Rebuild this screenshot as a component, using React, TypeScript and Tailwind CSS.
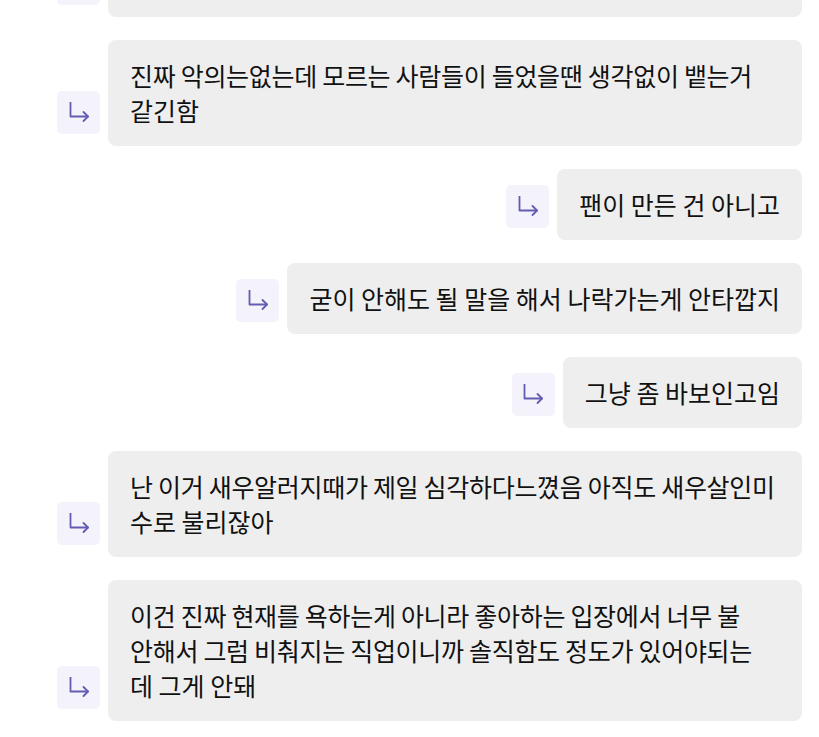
import React from 'react'

type Msg = { lines: string[] }

const messages: Msg[] = [
  { lines: ['진짜 악의는없는데 모르는 사람들이 들었을땐 생각없이 뱉는거', '같긴함'] },
  { lines: ['팬이 만든 건 아니고'] },
  { lines: ['굳이 안해도 될 말을 해서 나락가는게 안타깝지'] },
  { lines: ['그냥 좀 바보인고임'] },
  { lines: ['난 이거 새우알러지때가 제일 심각하다느꼈음 아직도 새우살인미', '수로 불리잖아'] },
  {
    lines: [
      '이건 진짜 현재를 욕하는게 아니라 좋아하는 입장에서 너무 불',
      '안해서 그럼 비춰지는 직업이니까 솔직함도 정도가 있어야되는',
      '데 그게 안돼',
    ],
  },
]

function ReplyIcon() {
  return (
    <div className="flex h-[43px] w-[43px] shrink-0 items-center justify-center rounded-[5px] bg-[#f4f3fc]">
      <svg width="22" height="22" viewBox="0 0 22 22" fill="none" stroke="#625db0" strokeWidth="1.8" strokeLinecap="round" strokeLinejoin="round">
        <path d="M2.5 0 V14.5 H20" />
        <path d="M15.5 10 L20 14.5 L15.5 19" />
      </svg>
    </div>
  )
}

function Row({ msg }: { msg: Msg }) {
  const multi = msg.lines.length > 1
  return (
    <div className="flex items-end justify-end gap-2">
      <div className="mb-3">
        <ReplyIcon />
      </div>
      <div className={`${multi ? 'min-w-0 flex-1' : ''} rounded-lg bg-[#eeeeee] px-[22px] py-[18px] text-[25px] leading-[35px] text-[#111111] whitespace-nowrap`}>
        {msg.lines.map((l, i) => (
          <div key={i} className={l.length > 31 ? 'tracking-[-0.3px]' : ''}>{l}</div>
        ))}
      </div>
    </div>
  )
}

export default function App() {
  return (
    <div
      className="h-[737px] w-[819px] overflow-hidden bg-white"
      style={{ fontFamily: '"Noto Sans CJK KR", "Noto Sans", sans-serif' }}
    >
      <div className="-mt-[55px] flex flex-col gap-[23px] pl-[57px] pr-[17px]">
        <div className="flex items-end gap-2">
          <div className="mb-3 h-[43px] w-[43px] shrink-0 rounded-[5px] bg-[#f4f3fc]" />
          <div className="h-[72px] flex-1 rounded-lg bg-[#eeeeee]" />
        </div>
        {messages.map((m, i) => (
          <Row key={i} msg={m} />
        ))}
      </div>
    </div>
  )
}
